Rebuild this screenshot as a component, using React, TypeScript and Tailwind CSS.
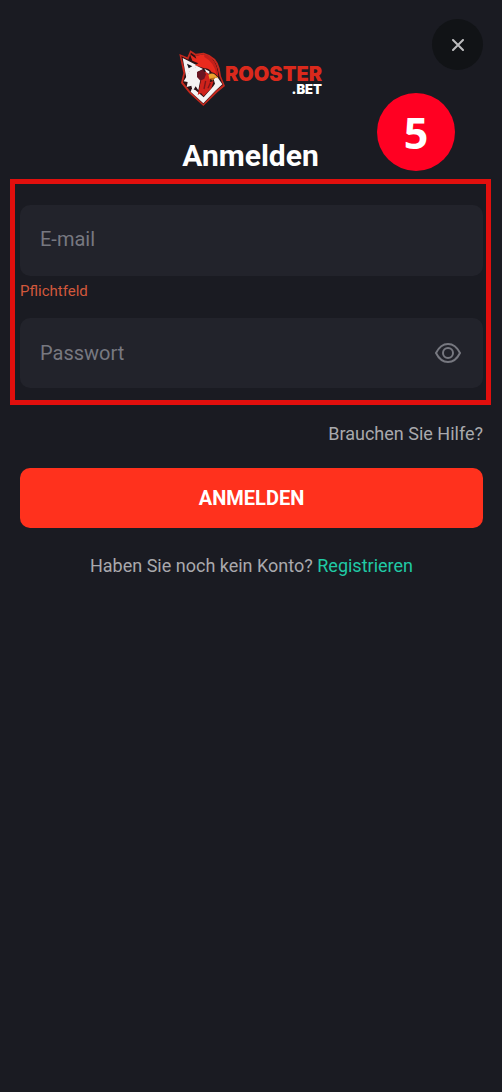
import { useState } from "react";
import type { FormEvent } from "react";

const RoosterMark = () => {
  return (
    <svg viewBox="12 13 138 168" className="h-14 w-[46px]" aria-hidden="true">
      <path
        d="M13 25 L37 35 L46 14 L62 24 L86 21 Q126 32 134 68 L138 92 L150 121 L128 139 L85 181 L43 143 L18 112 L25 82 Z"
        fill="#c5281d"
      />
      <path
        d="M19 32 L40 42 L48 21 L62 31 L86 26 Q119 36 128 70 L133 92 L144 118 L124 134 L85 175 L47 139 L24 110 L31 80 Z"
        fill="#2b1216"
      />
      <path d="M23 37 L70 61 L45 76 L34 96 Z" fill="#f5f3f3" />
      <path d="M36 54 L52 62 L41 68 Z" fill="#17171c" />
      <path
        d="M50 130 L61 133 L86 155 L115 122 L120 114 L115 98 L127 94 L142 116 L121 135 L85 173 L47 138 Z"
        fill="#f5f3f3"
      />
      <path
        d="M46 72 L68 62 L84 70 L68 78 L66 92 L76 102 L70 134 L62 122 L53 137 L49 120 L35 124 L38 109 L26 107 L35 92 Z"
        fill="#f5f3f3"
      />
      <path
        d="M45 26 L64 39 L61 31 L86 26 Q106 32 117 48 Q127 64 129 94 Q122 82 110 80 Q102 67 88 68 L60 59 L70 53 L52 45 Z"
        fill="#ea2a1d"
      />
      <path
        d="M88 26 Q126 38 130 93 L124 86 Q118 50 88 34 Z"
        fill="#c41f1a"
      />
      <path
        d="M76 88 L94 77 L108 96 L104 110 L116 106 L109 128 L86 152 L78 142 L68 148 L77 109 Z"
        fill="#cf221b"
      />
      <path d="M66 79 L84 72 L93 86 L88 99 L76 105 L66 94 Z" fill="#6a1622" />
      <path d="M88 69 L103 77 L103 85 L94 80 Z" fill="#f5f3f3" />
      <path
        d="M92 106 L87 130 M106 112 L99 128"
        stroke="#7c161a"
        strokeWidth="4"
        fill="none"
      />
      <path d="M100 87 Q117 76 129 98 Q115 93 104 101 Z" fill="#eda32d" />
      <path d="M105 97 L122 96 L112 105 Z" fill="#b86a1d" />
    </svg>
  );
};

const Logo = () => {
  return (
    <div className="flex items-center justify-center">
      <RoosterMark />
      <div className="flex flex-col items-end pt-[6px] font-['Inter',sans-serif] font-black">
        <span className="text-xl leading-4 text-[#da291c]">ROOSTER</span>
        <span className="text-[13px] leading-[14px] text-white">.BET</span>
      </div>
    </div>
  );
};

const EyeIcon = () => {
  return (
    <svg
      viewBox="0 0 26 22"
      className="h-[22px] w-[26px]"
      fill="none"
      stroke="currentColor"
      strokeWidth="2"
      aria-hidden="true"
    >
      <path d="M1 11 C4 5 8 2 13 2 C18 2 22 5 25 11 C22 17 18 20 13 20 C8 20 4 17 1 11 Z" />
      <circle cx="13" cy="11" r="5" />
    </svg>
  );
};

const App = () => {
  const [showPassword, setShowPassword] = useState(false);

  const handleSubmit = (e: FormEvent) => {
    e.preventDefault();
  };

  return (
    <div className="relative min-h-screen bg-[#1a1b22] pl-[10px] pr-[11px] pt-[50px] font-['Roboto',sans-serif]">
      <button
        type="button"
        aria-label="Schließen"
        className="absolute right-[19px] top-[19px] flex size-[51px] items-center justify-center rounded-full bg-[#111316] text-[#bcbcbe]"
      >
        <svg
          viewBox="0 0 12 12"
          className="size-3"
          stroke="currentColor"
          strokeWidth="2"
          strokeLinecap="round"
          aria-hidden="true"
        >
          <path d="M1 1 L11 11 M11 1 L1 11" />
        </svg>
      </button>
      <div className="absolute right-[47px] top-[93px] flex size-[78px] items-center justify-center rounded-full bg-[#ff0022] font-['Open_Sans',sans-serif] text-[43px] font-bold leading-none text-white">
        5
      </div>

      <Logo />
      <h1 className="mt-8 text-center text-3xl font-bold leading-9 text-white">
        Anmelden
      </h1>

      <form onSubmit={handleSubmit}>
        <div className="mt-[5px] border-[5px] border-[#e10f0d] pb-3 pl-[5px] pr-[3px] pt-[21px]">
          <input
            type="email"
            aria-label="E-mail"
            aria-describedby="email-error"
            placeholder="E-mail"
            className="block h-[71px] w-full rounded-[10px] bg-[#22232b] px-5 pb-1 text-xl text-white outline-none placeholder:text-[#777880]"
          />
          <p
            id="email-error"
            className="mb-4 mt-1 text-[15px] leading-[22px] text-[#d2583c]"
          >
            Pflichtfeld
          </p>
          <div className="flex h-[70px] items-center rounded-[10px] bg-[#22232b] pl-5 pr-[22px]">
            <input
              type={showPassword ? "text" : "password"}
              aria-label="Passwort"
              placeholder="Passwort"
              className="h-full min-w-0 flex-1 bg-transparent text-xl text-white outline-none placeholder:text-[#777880]"
            />
            <button
              type="button"
              aria-label="Passwort anzeigen"
              onClick={() => setShowPassword(!showPassword)}
              className="text-[#777880]"
            >
              <EyeIcon />
            </button>
          </div>
        </div>

        <div className="pl-[10px] pr-2">
          <div className="mt-[17px] text-right text-lg leading-6">
            <a href="#" className="text-[#a9a9ad]">
              Brauchen Sie Hilfe?
            </a>
          </div>
          <button
            type="submit"
            className="mt-[22px] h-[60px] w-full rounded-[10px] bg-[#ff311d] text-xl font-bold text-white"
          >
            ANMELDEN
          </button>
          <p className="mt-[26px] text-center text-lg leading-6 text-[#a9a9ad]">
            Haben Sie noch kein Konto?{" "}
            <a href="#" className="text-[#20c9a5]">
              Registrieren
            </a>
          </p>
        </div>
      </form>
    </div>
  );
};

export default App;
